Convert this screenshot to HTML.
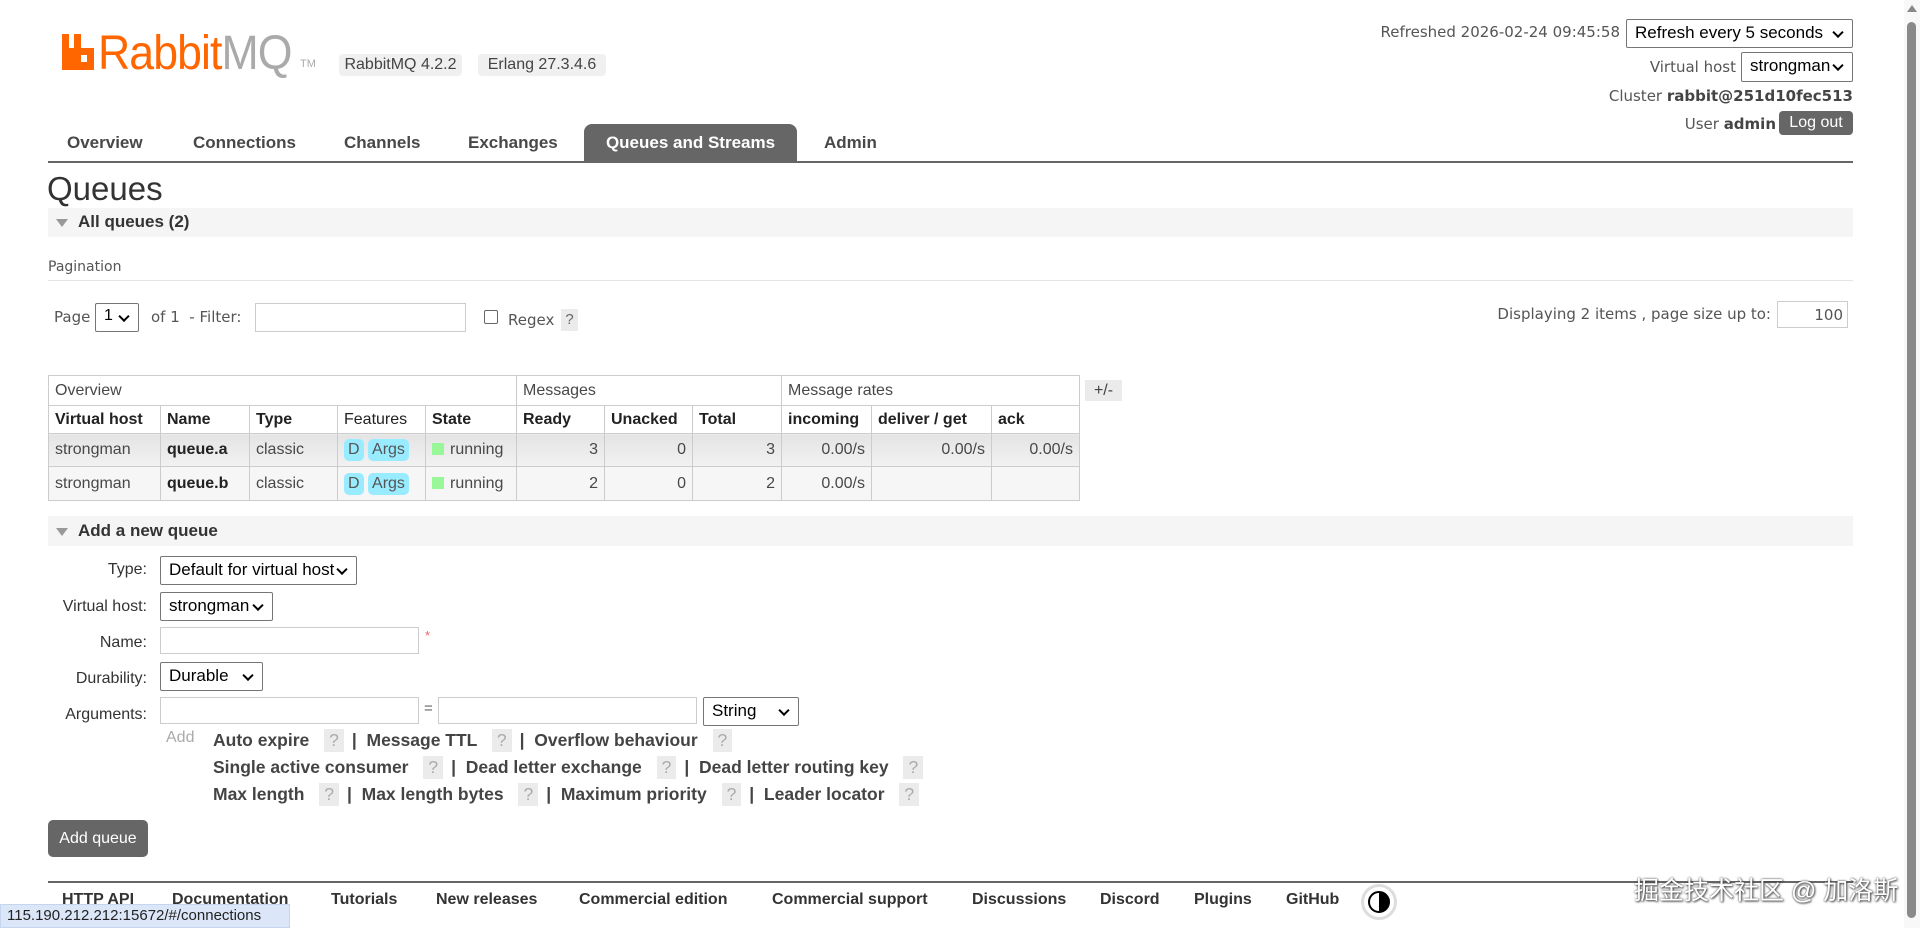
<!DOCTYPE html>
<html><head><meta charset="utf-8"><style>
*{box-sizing:border-box;margin:0;padding:0}
body{width:1920px;height:928px;overflow:hidden;background:#fff;position:relative;font-family:"Liberation Sans",sans-serif;color:#484848}
.a{position:absolute;white-space:nowrap}
.n{font-family:"Liberation Sans Narrow","Liberation Sans",sans-serif}
.v{font-family:"DejaVu Sans","Liberation Sans",sans-serif;font-size:15px;color:#555}
.sel{position:absolute;border:1px solid #767676;border-radius:2px;background:#fff;color:#000;font-size:17px;padding:3px 8px;font-family:"Liberation Sans",sans-serif}
.sel:after{content:"";position:absolute;right:10px;top:50%;width:6px;height:6px;border-right:2px solid #000;border-bottom:2px solid #000;transform:translateY(-70%) rotate(45deg)}
.inp{position:absolute;border:1px solid #ccc;background:#fff}
.tab{position:absolute;top:124px;height:38px;line-height:38px;font-weight:bold;font-size:17px;color:#484848}
.bar{position:absolute;left:48px;width:1805px;background:#f5f5f5}
table{position:absolute;left:48px;top:375px;border-collapse:collapse;font-size:16px}
td{border:1px solid #ccc;padding:0 6px;height:30px;white-space:nowrap}
.h td{font-weight:bold;color:#222;height:28px}
.r1 td{background:linear-gradient(#e4e4e4,#f2f2f2);height:33px}
.r2 td{background:#f6f6f6;height:34px}
.rt{text-align:right}
.bd{display:inline-block;background:#99ebff;border-radius:5px;padding:2px 4px;color:#555}
.sq{display:inline-block;width:12px;height:12px;background:#98f898;margin-right:6px;vertical-align:-1px}
.lnk{font-weight:bold;font-size:17.5px;color:#444}
.q{display:inline-block;background:#ebebeb;color:#aaa;padding:1px 5px;margin:0 8px 0 10px;font-weight:normal}
.lab{position:absolute;right:1773px;font-size:16px;color:#333}
.fl{position:absolute;top:891px;font-weight:bold;font-size:16px;color:#333}
</style></head><body>
<!-- logo -->
<div class="a" style="left:62px;top:34px;width:32px;height:36px">
<svg width="32" height="36" viewBox="0 0 32 36"><path d="M0 0h7v14h5V0h7v14h13v22H0z" fill="#f60"/><rect x="19" y="21" width="6" height="7" fill="#fff"/></svg></div>
<div class="a n" style="left:98px;top:26px;font-size:48px;letter-spacing:-1px;transform:scaleX(0.93);transform-origin:left top"><span style="color:#f60">Rabbit</span><span style="color:#aaa">MQ</span></div>
<div class="a" style="left:300px;top:58px;font-size:11px;color:#aaa">TM</div>
<div class="a n" style="left:339px;top:54px;width:123px;height:22px;background:#f0f0f0;border-radius:4px;font-size:16px;line-height:22px;text-align:center;color:#444">RabbitMQ 4.2.2</div>
<div class="a n" style="left:478px;top:54px;width:128px;height:22px;background:#f0f0f0;border-radius:4px;font-size:16px;line-height:22px;text-align:center;color:#444">Erlang 27.3.4.6</div>
<!-- top right -->
<div class="a v" style="right:300px;top:23px">Refreshed 2026-02-24 09:45:58</div>
<div class="sel" style="left:1626px;top:19px;width:227px;height:29px">Refresh every 5 seconds</div>
<div class="a v" style="right:184px;top:58px">Virtual host</div>
<div class="sel" style="left:1741px;top:52px;width:112px;height:30px">strongman</div>
<div class="a v" style="right:67px;top:87px">Cluster <b style="color:#444">rabbit@251d10fec513</b></div>
<div class="a v" style="right:144px;top:115px">User <b style="color:#444">admin</b></div>
<div class="a" style="left:1779px;top:111px;width:74px;height:24px;background:#666;color:#fff;border-radius:4px;font-size:16px;line-height:24px;text-align:center">Log out</div>
<!-- tabs -->
<div class="tab n" style="left:67px">Overview</div>
<div class="tab n" style="left:193px">Connections</div>
<div class="tab n" style="left:344px">Channels</div>
<div class="tab n" style="left:468px">Exchanges</div>
<div class="tab n" style="left:584px;width:213px;background:#666;color:#fff;text-align:center;border-radius:8px 8px 0 0">Queues and Streams</div>
<div class="tab n" style="left:824px">Admin</div>
<div class="a" style="left:48px;top:161px;width:1805px;height:2px;background:#666"></div>
<div class="a n" style="left:47px;top:170px;font-size:33px;color:#333">Queues</div>
<div class="bar" style="top:208px;height:29px"></div>
<div class="a" style="left:56px;top:219px;border-left:6px solid transparent;border-right:6px solid transparent;border-top:8px solid #999"></div>
<div class="a n" style="left:78px;top:212px;font-size:17px;font-weight:bold;color:#333">All queues (2)</div>
<div class="a v" style="left:48px;top:259px;font-size:14px">Pagination</div>
<div class="a" style="left:48px;top:280px;width:1805px;height:1px;background:#e4e4e4"></div>
<div class="a v" style="left:54px;top:308px">Page</div>
<div class="sel" style="left:95px;top:303px;width:44px;height:29px;font-size:16px">1</div>
<div class="a v" style="left:151px;top:308px">of 1 &nbsp;- Filter:</div>
<div class="inp" style="left:255px;top:303px;width:211px;height:29px"></div>
<div class="a" style="left:484px;top:310px;width:14px;height:14px;border:1px solid #666;border-radius:2px"></div>
<div class="a v" style="left:508px;top:311px">Regex</div>
<div class="a" style="left:561px;top:309px;width:17px;height:22px;background:#ebebeb;color:#666;font-size:15px;text-align:center;line-height:22px">?</div>
<div class="a v" style="right:149px;top:305px">Displaying 2 items , page size up to:</div>
<div class="inp" style="left:1777px;top:301px;width:71px;height:27px;font-size:15px;text-align:right;padding:4px 4px;color:#555;font-family:'DejaVu Sans'">100</div>
<!-- table -->
<table class="n">
<tr><td colspan="5" style="height:30px">Overview</td><td colspan="3">Messages</td><td colspan="3">Message rates</td></tr>
<tr class="h"><td style="width:112px">Virtual host</td><td style="width:89px">Name</td><td style="width:88px">Type</td><td style="width:88px;font-weight:normal">Features</td><td style="width:91px">State</td><td style="width:88px">Ready</td><td style="width:88px">Unacked</td><td style="width:89px">Total</td><td style="width:90px">incoming</td><td style="width:120px">deliver / get</td><td style="width:88px">ack</td></tr>
<tr class="r1"><td>strongman</td><td><b style="color:#222">queue.a</b></td><td>classic</td><td><span class="bd">D</span> <span class="bd">Args</span></td><td><span class="sq"></span>running</td><td class="rt">3</td><td class="rt">0</td><td class="rt">3</td><td class="rt">0.00/s</td><td class="rt">0.00/s</td><td class="rt">0.00/s</td></tr>
<tr class="r2"><td>strongman</td><td><b style="color:#222">queue.b</b></td><td>classic</td><td><span class="bd">D</span> <span class="bd">Args</span></td><td><span class="sq"></span>running</td><td class="rt">2</td><td class="rt">0</td><td class="rt">2</td><td class="rt">0.00/s</td><td></td><td></td></tr>
</table>
<div class="a n" style="left:1085px;top:380px;width:37px;height:21px;background:#ebebeb;font-size:16px;line-height:21px;text-align:center;color:#444">+/-</div>
<!-- add queue -->
<div class="bar" style="top:516px;height:30px"></div>
<div class="a" style="left:56px;top:528px;border-left:6px solid transparent;border-right:6px solid transparent;border-top:8px solid #999"></div>
<div class="a n" style="left:78px;top:521px;font-size:17px;font-weight:bold;color:#333">Add a new queue</div>
<div class="lab n" style="top:561px">Type:</div>
<div class="sel n" style="left:160px;top:556px;width:197px;height:29px">Default for virtual host</div>
<div class="lab n" style="top:598px">Virtual host:</div>
<div class="sel n" style="left:160px;top:592px;width:113px;height:29px">strongman</div>
<div class="lab n" style="top:634px">Name:</div>
<div class="inp" style="left:160px;top:627px;width:259px;height:27px"></div>
<div class="a" style="left:425px;top:628px;color:#e66;font-size:13px">*</div>
<div class="lab n" style="top:670px">Durability:</div>
<div class="sel n" style="left:160px;top:662px;width:103px;height:29px">Durable</div>
<div class="lab n" style="top:706px">Arguments:</div>
<div class="inp" style="left:160px;top:697px;width:259px;height:27px"></div>
<div class="a" style="left:424px;top:700px;font-size:15px;color:#666">=</div>
<div class="inp" style="left:438px;top:697px;width:259px;height:27px"></div>
<div class="sel n" style="left:703px;top:697px;width:96px;height:29px">String</div>
<div class="a n" style="left:166px;top:729px;font-size:16px;color:#aaa">Add</div>
<div class="a n lnk" style="left:213px;top:729px">Auto expire <span class="q">?</span>| &nbsp;Message TTL <span class="q">?</span>| &nbsp;Overflow behaviour <span class="q">?</span></div>
<div class="a n lnk" style="left:213px;top:756px">Single active consumer <span class="q">?</span>| &nbsp;Dead letter exchange <span class="q">?</span>| &nbsp;Dead letter routing key <span class="q">?</span></div>
<div class="a n lnk" style="left:213px;top:783px">Max length <span class="q">?</span>| &nbsp;Max length bytes <span class="q">?</span>| &nbsp;Maximum priority <span class="q">?</span>| &nbsp;Leader locator <span class="q">?</span></div>
<div class="a n" style="left:48px;top:820px;width:100px;height:37px;background:#666;border-radius:5px;color:#fff;font-size:16px;line-height:37px;text-align:center">Add queue</div>
<!-- footer -->
<div class="a" style="left:48px;top:881px;width:1805px;height:2px;background:#666"></div>
<div class="fl n" style="left:62px">HTTP API</div>
<div class="fl n" style="left:172px">Documentation</div>
<div class="fl n" style="left:331px">Tutorials</div>
<div class="fl n" style="left:436px">New releases</div>
<div class="fl n" style="left:579px">Commercial edition</div>
<div class="fl n" style="left:772px">Commercial support</div>
<div class="fl n" style="left:972px">Discussions</div>
<div class="fl n" style="left:1100px">Discord</div>
<div class="fl n" style="left:1194px">Plugins</div>
<div class="fl n" style="left:1286px">GitHub</div>
<div class="a" style="left:1361px;top:884px;width:36px;height:36px;border-radius:50%;border:3px solid #ddd;background:#fff"><div style="position:absolute;left:4px;top:4px;width:22px;height:22px;border-radius:50%;border:2px solid #000;background:linear-gradient(90deg,#fff 50%,#000 50%)"></div></div>
<div class="a" style="left:0;top:904px;width:290px;height:24px;background:#dbe7f8;border:1px solid #c5d5ee;font-size:15px;line-height:22px;padding-left:6px;color:#222">115.190.212.212:15672/#/connections</div>
<div class="a" style="left:1634px;top:871px;font-family:'Liberation Sans','Noto Sans CJK SC',sans-serif;font-size:25px;color:#fff;text-shadow:0 0 2px #444,1px 1px 2px #444">掘金技术社区 @ 加洛斯</div>
<!-- scrollbar -->
<div class="a" style="left:1904px;top:0;width:16px;height:928px;background:#f8f8f8"></div>
<div class="a" style="left:1907px;top:22px;width:9px;height:896px;background:#8a8a8a;border-radius:5px"></div>
<div class="a" style="left:1907px;top:5px;border-left:5px solid transparent;border-right:5px solid transparent;border-bottom:7px solid #888"></div>
</body></html>
